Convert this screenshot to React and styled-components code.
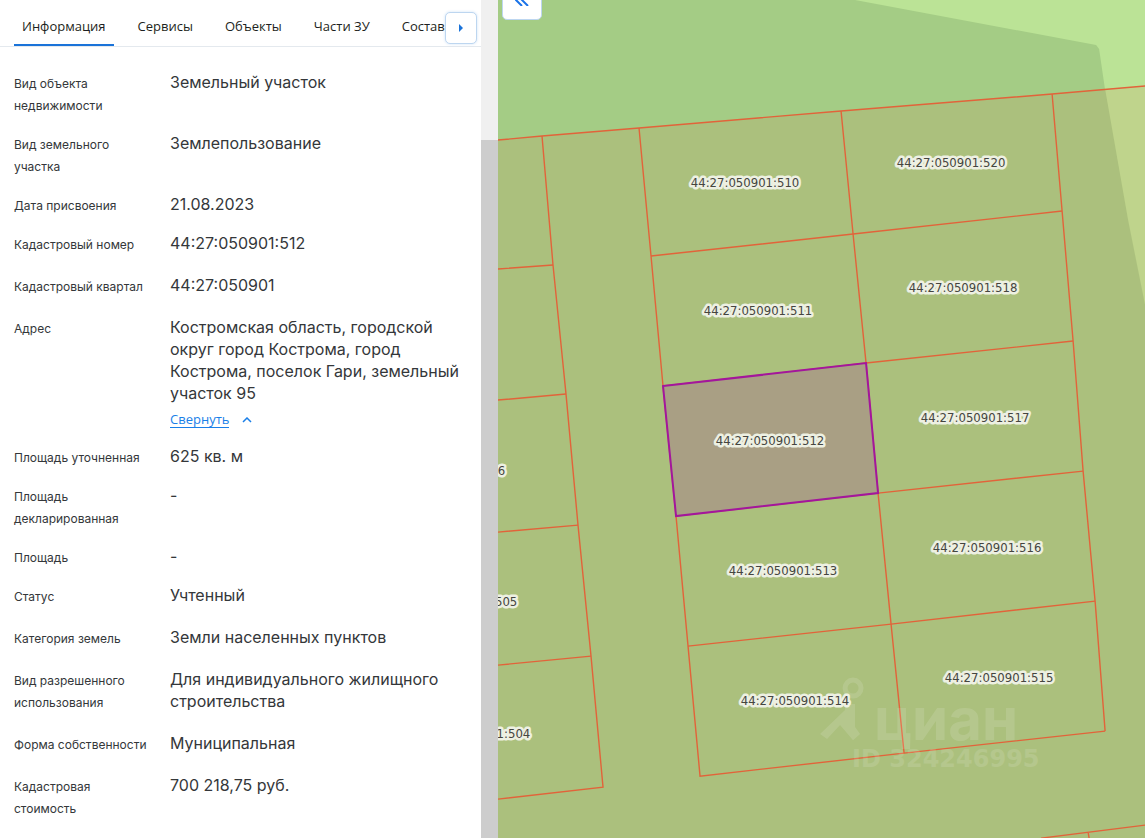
import React, { useState } from 'react'
import styled, { createGlobalStyle } from 'styled-components'

const tabs = ['Информация', 'Сервисы', 'Объекты', 'Части ЗУ', 'Состав']

const address =
  'Костромская область, городской округ город Кострома, город Кострома, поселок Гари, земельный участок 95'

const fields = [
  { label: 'Вид объекта недвижимости', value: 'Земельный участок' },
  { label: 'Вид земельного участка', value: 'Землепользование' },
  { label: 'Дата присвоения', value: '21.08.2023' },
  { label: 'Кадастровый номер', value: '44:27:050901:512', wide: true },
  { label: 'Кадастровый квартал', value: '44:27:050901', wide: true },
  { label: 'Адрес', value: address, collapsible: true },
  { label: 'Площадь уточненная', value: '625 кв. м' },
  { label: 'Площадь декларированная', value: '-' },
  { label: 'Площадь', value: '-' },
  { label: 'Статус', value: 'Учтенный', wide: true },
  { label: 'Категория земель', value: 'Земли населенных пунктов', wide: true },
  {
    label: 'Вид разрешенного использования',
    value: 'Для индивидуального жилищного строительства',
    wide: true,
  },
  { label: 'Форма собственности', value: 'Муниципальная', wide: true },
  { label: 'Кадастровая стоимость', value: '700 218,75 руб.', wide: true },
]

// parcel borders, in map units
const borders = [
  'M0 140 L44 136 L141 128 L343 111 L554 94 L647 86',
  'M44 136 L55 265 L68 394 L80 525 L93 656 L105 787 L0 799',
  'M0 269 L55 265 M0 400 L68 394 M0 532 L80 525 M0 665 L93 656',
  'M141 128 L153 256 L165 386 L178 516 L190 646 L202 776 L406 753 L607 731',
  'M343 111 L355 234 L368 363 L380 493 L393 624 L406 753',
  'M554 94 L564 211 L575 341 L585 471 L597 601 L607 731',
  'M153 256 L355 234 L564 211 M165 386 L368 363 L575 341',
  'M178 516 L380 493 L585 471 M190 646 L393 624 L597 601',
  'M543 838 L647 825 M590 832 L591 838',
]

const parcels = [
  { id: '44:27:050901:506', x: -47, y: 475 },
  { id: '44:27:050901:505', x: -35, y: 606 },
  { id: '44:27:050901:504', x: -22, y: 738 },
  { id: '44:27:050901:510', x: 247, y: 187 },
  { id: '44:27:050901:511', x: 260, y: 315 },
  { id: '44:27:050901:512', x: 272, y: 445 },
  { id: '44:27:050901:513', x: 285, y: 575 },
  { id: '44:27:050901:514', x: 297, y: 705 },
  { id: '44:27:050901:520', x: 453, y: 167 },
  { id: '44:27:050901:518', x: 465, y: 292 },
  { id: '44:27:050901:517', x: 477, y: 422 },
  { id: '44:27:050901:516', x: 489, y: 552 },
  { id: '44:27:050901:515', x: 501, y: 682 },
]

const ParcelMap = () => (
  <MapCanvas viewBox='0 0 647 838' preserveAspectRatio='xMinYMin slice'>
    <rect width='647' height='838' fill='#a4cc85' />
    <path d='M357 0 L598 45 L601 49 L607 90 L630 220 L647 305 V0 Z' fill='#bbe396' />
    <path d='M0 140 L141 128 L343 111 L554 94 L647 86 V838 H0 Z' fill='#abc07d' />
    <path d='M607 89 L630 220 L647 305 V86 Z' fill='#bfd48c' />
    {borders.map((d) => (
      <path key={d} d={d} fill='none' stroke='#e2633a' strokeWidth='1.4' />
    ))}
    <path
      d='M165 386 L368 363 L380 493 L178 516 Z'
      fill='#a99f84'
      stroke='#a3169c'
      strokeWidth='2'
    />
    {parcels.map(({ id, x, y }) => (
      <ParcelId key={id} x={x} y={y}>
        {id}
      </ParcelId>
    ))}
    <g opacity='0.12'>
      <circle cx='355' cy='688' r='8' fill='none' stroke='#fff' strokeWidth='5' />
      <path
        d='M322 734 L347 710 V704 H357 V727 L362 734 L355 740 L342 725 L329 739 Z'
        fill='#fff'
      />
      <Brand x='376' y='740'>
        циан
      </Brand>
      <BrandId x='354' y='767'>
        ID 324246995
      </BrandId>
    </g>
  </MapCanvas>
)

const Field = ({ label, value, wide, collapsible }) => {
  const [open, setOpen] = useState(true)
  return (
    <Row $wide={wide}>
      <Label>{label}</Label>
      <Value>
        {collapsible && !open ? `${value.substring(0, 30)}...` : value}
        {collapsible && (
          <Collapse type='button' onClick={() => setOpen(!open)}>
            <span>{open ? 'Свернуть' : 'Развернуть'}</span>
            <svg width='10' height='6' viewBox='0 0 10 6'>
              <path
                d={open ? 'M1 5 L5 1 L9 5' : 'M1 1 L5 5 L9 1'}
                fill='none'
                stroke='currentColor'
                strokeWidth='1.5'
              />
            </svg>
          </Collapse>
        )}
      </Value>
    </Row>
  )
}

const App = () => {
  const [active, setActive] = useState(tabs[0])
  return (
    <Page>
      <GlobalStyle />
      <Panel>
        <TabBar>
          <TabList role='tablist'>
            {tabs.map((tab) => (
              <Tab
                key={tab}
                type='button'
                role='tab'
                aria-selected={tab === active}
                $active={tab === active}
                onClick={() => setActive(tab)}
              >
                {tab}
              </Tab>
            ))}
          </TabList>
          <NextButton type='button' aria-label='Следующие вкладки'>
            <svg width='4' height='8' viewBox='0 0 4 8'>
              <path d='M0 0 L4 4 L0 8 Z' fill='currentColor' />
            </svg>
          </NextButton>
        </TabBar>
        <Fields>
          {fields.map((field) => (
            <Field key={field.label} {...field} />
          ))}
        </Fields>
      </Panel>
      <ScrollTrack>
        <ScrollThumb />
      </ScrollTrack>
      <MapArea>
        <ParcelMap />
        <HideButton type='button' aria-label='Скрыть панель'>
          <svg width='14' height='12' viewBox='0 0 14 12'>
            <path
              d='M7 0 L1 6 L7 12 M13 0 L7 6 L13 12'
              fill='none'
              stroke='currentColor'
              strokeWidth='2'
            />
          </svg>
        </HideButton>
      </MapArea>
    </Page>
  )
}

const GlobalStyle = createGlobalStyle`
  body {
    margin: 0;
    background: #ffffff;
    color: #34373a;
    font-family: Inter, 'Liberation Sans', sans-serif;
  }

  * {
    box-sizing: border-box;
  }

  button {
    font: inherit;
    cursor: pointer;
  }
`

const Page = styled.main`
  display: flex;
  height: 100vh;
  overflow: hidden;
`

const Panel = styled.section`
  flex: 0 1 42%;
  min-width: 0;
  overflow-x: hidden;
  overflow-y: auto;
`

const TabBar = styled.div`
  display: flex;
  align-items: flex-start;
  height: 47px;
  padding: 0 4px 0 14px;
  border-bottom: 1px solid #e4e9ee;
`

const TabList = styled.div`
  flex: 1;
  display: flex;
  gap: 16px;
  min-width: 0;
  overflow: hidden;
`

const Tab = styled.button`
  flex: none;
  height: 46px;
  padding: 8px 8px 0;
  border: none;
  border-bottom: 2px solid ${({ $active }) => ($active ? '#1a73d9' : 'transparent')};
  background: none;
  color: #1d1f21;
  font-family: 'Open Sans', 'Noto Sans', sans-serif;
  font-size: 13px;
  line-height: 20px;
`

const NextButton = styled.button`
  flex: none;
  width: 32px;
  height: 32px;
  margin-top: 12px;
  padding: 0;
  display: grid;
  place-content: center;
  border: 1px solid #bdd6f0;
  border-radius: 5px;
  background: #ffffff;
  color: #1a73d9;
  box-shadow: 0 0 3px rgba(26, 115, 217, 0.2);
`

const Fields = styled.dl`
  margin: 0;
  padding: 24px 14px 0;
`

const Row = styled.div`
  display: grid;
  grid-template-columns: 136px 1fr;
  column-gap: 20px;
  padding-bottom: ${({ $wide }) => ($wide ? '20px' : '17px')};
  line-height: 22px;
`

const Label = styled.dt`
  padding-top: 2px;
  margin-bottom: -2px;
  font-size: 12px;
`

const Value = styled.dd`
  margin: 0;
  font-size: 16px;
`

const Collapse = styled.button`
  display: flex;
  align-items: center;
  gap: 13px;
  margin-top: 8px;
  padding: 0;
  border: none;
  background: none;
  color: #1a7fe8;
  font-family: 'Open Sans', 'Noto Sans', sans-serif;
  font-size: 13px;
  line-height: 15px;

  span {
    border-bottom: 1px solid currentColor;
  }
`

const ScrollTrack = styled.div`
  flex: none;
  width: 17px;
  padding-top: 140px;
  display: flex;
  background: #f0f0f0;
`

const ScrollThumb = styled.div`
  flex: 1;
  background: #cdcdcd;
`

const MapArea = styled.section`
  position: relative;
  flex: 1;
  min-width: 0;
  background: #abc07d;
`

const MapCanvas = styled.svg`
  display: block;
  width: 100%;
  height: 100%;
`

const ParcelId = styled.text`
  font-family: 'DejaVu Sans Condensed', 'DejaVu Sans', sans-serif;
  font-size: 13px;
  text-anchor: middle;
  fill: #45453f;
  stroke: #edf0e2;
  stroke-width: 5px;
  stroke-linejoin: round;
  paint-order: stroke;
`

const Brand = styled.text`
  font-family: Inter, sans-serif;
  font-size: 58px;
  font-weight: 700;
  fill: #ffffff;
`

const BrandId = styled.text`
  font-family: 'DejaVu Sans', sans-serif;
  font-size: 24px;
  font-weight: 700;
  fill: #ffffff;
`

const HideButton = styled.button`
  position: absolute;
  top: -20px;
  left: 4px;
  width: 40px;
  height: 40px;
  display: grid;
  place-content: center;
  border: 1px solid #bdd6f0;
  border-radius: 5px;
  background: #ffffff;
  color: #1a73e8;
`

export default App
